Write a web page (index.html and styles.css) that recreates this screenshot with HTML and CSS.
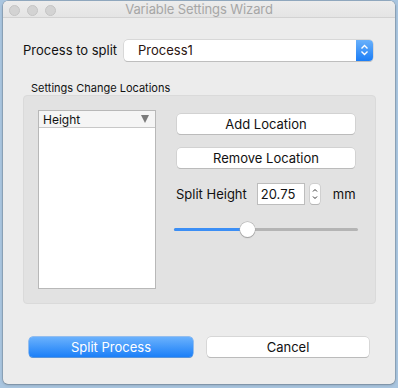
FILE: index.html
```html
<!DOCTYPE html>
<html>
<head>
<meta charset="utf-8">
<link rel="stylesheet" href="styles.css">
</head>
<body>
<div class="window">
  <div class="titlebar">
    <div class="lights"><span></span><span></span><span></span></div>
    <div class="title">Variable Settings Wizard</div>
  </div>
  <div class="content">
    <div class="row-process">
      <span class="label">Process to split</span>
      <div class="popup">
        <span class="popup-text">Process1</span>
        <span class="popup-arrows">
          <svg width="17" height="20" viewBox="0 0 17 20"><path d="M5.5 8.5 L8.5 5.5 L11.5 8.5 M5.5 11.5 L8.5 14.5 L11.5 11.5" fill="none" stroke="#fff" stroke-width="1.4"/></svg>
        </span>
      </div>
    </div>
    <div class="group-title">Settings Change Locations</div>
    <div class="group">
      <div class="list">
        <div class="list-head"><span>Height</span><span class="tri"></span></div>
      </div>
      <div class="side">
        <button class="btn wide">Add Location</button>
        <button class="btn wide">Remove Location</button>
        <div class="split-row">
          <span class="label">Split Height</span>
          <div class="field">20.75</div>
          <div class="stepper">
            <svg width="10" height="20" viewBox="0 0 10 20"><path d="M3 7.5 L5 5.5 L7 7.5 M3 12.5 L5 14.5 L7 12.5" fill="none" stroke="#333" stroke-width="1"/></svg>
          </div>
          <span class="label unit">mm</span>
        </div>
        <div class="slider">
          <div class="track"><div class="fill"></div></div>
          <div class="thumb"></div>
        </div>
      </div>
    </div>
    <div class="actions">
      <button class="btn primary">Split Process</button>
      <button class="btn cancel">Cancel</button>
    </div>
  </div>
</div>
</body>
</html>
```
FILE: styles.css
```css
* { box-sizing: border-box; }
html, body { margin: 0; padding: 0; }
body {
  width: 398px;
  height: 388px;
  background: #a9c5df;
  padding: 1px 0 0 3px;
  font-family: "Inter", "Liberation Sans", sans-serif;
  color: #111;
  overflow: hidden;
}
.window {
  width: 392px;
  height: 383px;
  background: #ececec;
  border-radius: 5px;
  box-shadow: 0 0 0 0.5px rgba(0,0,0,0.25), 0 1px 3px rgba(0,0,0,0.2);
  overflow: hidden;
}
.titlebar {
  position: relative;
  height: 17px;
  background: linear-gradient(#ececec, #e4e4e4);
  border-bottom: 1px solid #d2d2d2;
  display: flex;
  align-items: center;
  justify-content: center;
}
.lights {
  position: absolute;
  left: 6px;
  top: 4px;
  display: flex;
  gap: 7px;
}
.lights span {
  width: 11px;
  height: 11px;
  border-radius: 50%;
  background: #d3d3d3;
  border: 0.5px solid #c4c4c4;
}
.title {
  font-size: 13px;
  color: #a6a6a6;
  line-height: 17px;
  letter-spacing: -0.1px;
}
.content {
  padding: 22px 0 0 20px;
}
.row-process {
  display: flex;
  align-items: center;
  width: 350px;
  height: 20px;
}
.label {
  font-size: 13px;
  color: #111;
}
.popup {
  margin-left: auto;
  width: 249px;
  height: 21px;
  background: #fff;
  border-radius: 4px;
  box-shadow: 0 0 0 0.5px #c4c4c4, 0 1px 0.5px #b8b8b8;
  display: flex;
  align-items: center;
  overflow: hidden;
}
.popup-text {
  flex: 1;
  padding-left: 14px;
  font-size: 13px;
  color: #2a1410;
}
.popup-arrows {
  width: 17px;
  height: 21px;
  background: linear-gradient(#69b1fb, #1b7df6);
  display: flex;
  align-items: center;
  justify-content: center;
}
.group-title {
  font-size: 11px;
  line-height: 14px;
  margin: 21px 0 0 8px;
  height: 14px;
  color: #111;
}
.group {
  width: 353px;
  height: 209px;
  background: #e2e2e2;
  border: 1px solid #dadada;
  border-radius: 4px;
  padding: 14px;
  display: flex;
  gap: 20px;
}
.list {
  width: 118px;
  height: 179px;
  background: #fff;
  border: 1px solid #b8b8b8;
}
.list-head {
  height: 17px;
  background: #f5f5f5;
  border-bottom: 1px solid #c8c8c8;
  display: flex;
  align-items: center;
  justify-content: space-between;
  padding: 0 6px 0 4px;
  font-size: 12px;
}
.tri {
  width: 0;
  height: 0;
  border-left: 4.5px solid transparent;
  border-right: 4.5px solid transparent;
  border-top: 8px solid #7a7a7a;
}
.side {
  display: flex;
  flex-direction: column;
  padding-top: 4px;
}
.btn {
  font-family: "Inter", "Liberation Sans", sans-serif;
  font-size: 13px;
  color: #111;
  background: #fff;
  border: none;
  border-radius: 4px;
  box-shadow: 0 0 0 0.5px #c2c2c2, 0 1px 0.5px #b4b4b4;
  height: 20px;
  padding: 0;
  margin: 0;
  display: flex;
  align-items: center;
  justify-content: center;
}
.wide {
  width: 178px;
  margin-left: 1px;
}
.wide + .wide {
  margin-top: 14px;
}
.split-row {
  display: flex;
  align-items: center;
  margin-top: 15px;
  height: 22px;
}
.field {
  margin-left: 10px;
  width: 48px;
  height: 22px;
  background: #fff;
  border: 1px solid #bdbdbd;
  font-size: 13px;
  padding-left: 3px;
  display: flex;
  align-items: center;
}
.stepper {
  margin-left: 5px;
  width: 10px;
  height: 20px;
  background: #fff;
  border-radius: 3px;
  box-shadow: 0 0 0 0.5px #bdbdbd, 0 1px 0.5px #b0b0b0;
  display: flex;
}
.unit {
  margin-left: 13px;
}
.slider {
  position: relative;
  margin-top: 16px;
  width: 184px;
  margin-left: -2px;
  height: 16px;
  display: flex;
  align-items: center;
}
.track {
  width: 100%;
  height: 3px;
  border-radius: 2px;
  background: #b4b4b4;
}
.fill {
  width: 73px;
  height: 3px;
  border-radius: 2px;
  background: #3b8ef5;
}
.thumb {
  position: absolute;
  left: 66px;
  top: 1px;
  width: 15px;
  height: 15px;
  border-radius: 50%;
  background: #fff;
  box-shadow: 0 0 0 0.5px #a8a8a8, 0 1px 1px rgba(0,0,0,0.3);
}
.actions {
  display: flex;
  margin-top: 33px;
  padding-left: 6px;
  gap: 14px;
}
.primary {
  width: 164px;
  background: linear-gradient(#6ab1fd, #1b7ff8);
  color: #fff;
  box-shadow: 0 0 0 0.5px #3a8ef0, 0 1px 0.5px #7a9cc4;
}
.cancel {
  width: 162px;
}
```
